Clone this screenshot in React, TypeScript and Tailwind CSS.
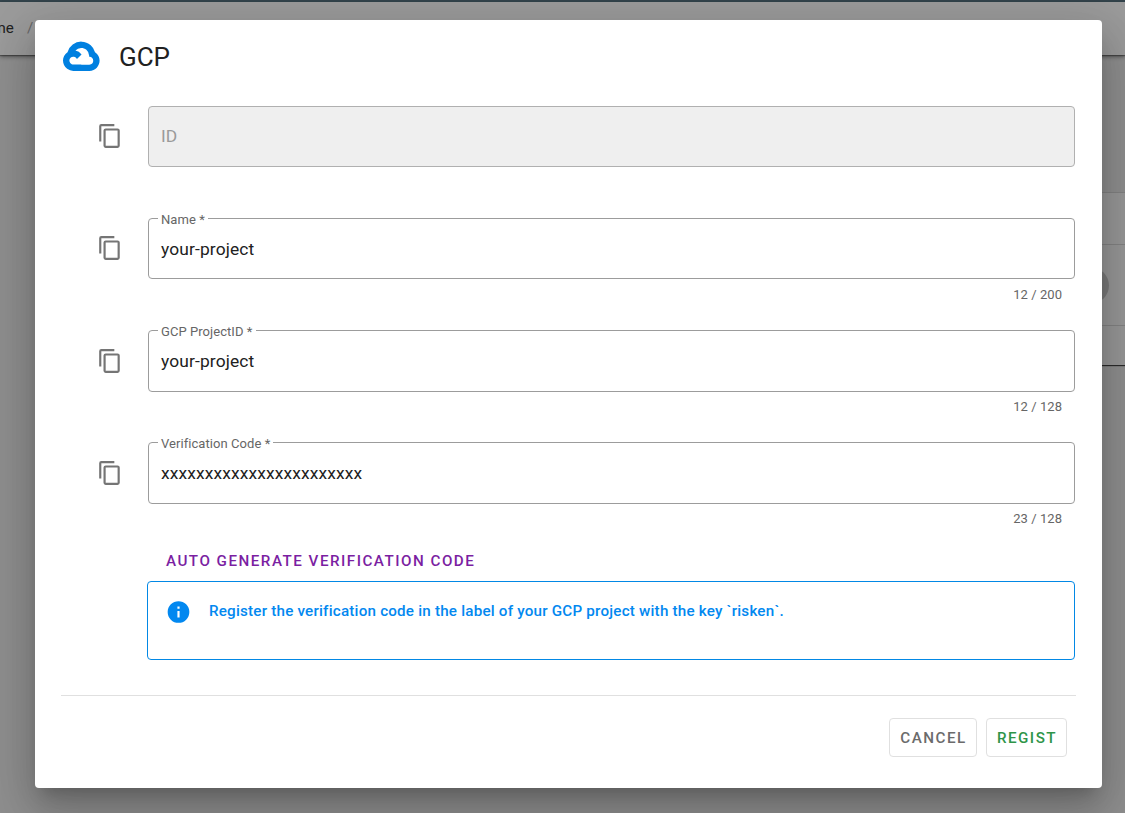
import { SiGooglecloud } from 'react-icons/si';

type FieldProps = {
  label: string;
  value?: string;
  counter?: string;
  disabled?: boolean;
  tall?: boolean;
};

function CopyIcon() {
  return (
    <svg viewBox="0 0 24 24" className="size-[26px] shrink-0 fill-[#757575]">
      <path d="M19,21H8V7H19M19,5H8A2,2 0 0,0 6,7V21A2,2 0 0,0 8,23H19A2,2 0 0,0 21,21V7A2,2 0 0,0 19,5M16,1H4A2,2 0 0,0 2,3V17H4V3H16V1Z" />
    </svg>
  );
}

function Field({ label, value, counter, disabled, tall }: FieldProps) {
  return (
    <div className="flex h-28 items-start pl-[62px]">
      <div className={`flex w-[51px] items-center ${tall ? 'h-[62px]' : 'h-[60px]'}`}>
        <CopyIcon />
      </div>
      <div className="flex-1">
        <div
          className={`relative flex items-center rounded-[4px] border px-3 ${tall ? 'h-[62px]' : 'h-[61px]'} ${
            disabled ? 'border-[#b0b0b0] bg-[#efefef]' : 'border-[#9c9c9c] bg-white'
          }`}
        >
          {disabled ? (
            <span className="pb-px text-[17.4px] leading-6 tracking-[0.1px] text-[#9a9a9a]">{label}</span>
          ) : (
            <>
              <span className="absolute -top-[7px] left-[9px] bg-white px-[3px] text-[13px] leading-4 tracking-[0.06px] text-[#666]">
                {label}
              </span>
              <span className="text-[17.4px] leading-6 tracking-[0.12px] text-[#212121]">{value}</span>
            </>
          )}
        </div>
        {counter && (
          <div
            className={`pr-[13px] text-right text-[13px] leading-[14px] tracking-[0.06px] text-[#666] ${
              tall ? 'mt-[8px]' : 'mt-[9px]'
            }`}
          >
            {counter}
          </div>
        )}
      </div>
    </div>
  );
}

export default function App() {
  return (
    <div className="relative h-[813px] w-[1125px] overflow-hidden bg-[#8f8f8f] font-['Roboto',sans-serif]">
      <div className="h-0.5 bg-[#34454d]" />
      <div className="flex h-[53px] items-center bg-[#9b9b9b] text-[15.2px] text-[#212121] shadow-[0_2px_4px_rgba(0,0,0,0.4),0_1px_1px_rgba(0,0,0,0.3)]">
        <span className="-ml-[27px]">Home</span>
        <span className="ml-[13px] text-[#666]">/</span>
      </div>
      <div className="mt-[137px] ml-[500px] flex h-[173px] flex-col border-t border-[#828282] bg-[#989898] shadow-[0_1px_1px_rgba(0,0,0,0.7)]">
        <div className="h-[52px] border-b border-[#838383]" />
        <div className="flex h-[81px] items-center border-b border-[#838383] pl-[572px]">
          <div className="size-[37px] rounded-full bg-[#7b7b7b]" />
        </div>
      </div>

      <div className="absolute top-5 left-[35px] flex h-[768px] w-[1067px] flex-col rounded-[4px] bg-white pr-[27px] shadow-[0_12px_16px_-8px_rgba(0,0,0,0.2),0_26px_41px_3px_rgba(0,0,0,0.14),0_10px_50px_9px_rgba(0,0,0,0.12)]">
        <header className="flex h-[86px] items-center pb-3 pl-7">
          <SiGooglecloud className="mb-[1.4px] size-[36.6px] text-[#0080e0]" />
          <h1 className="ml-[19.4px] text-[26px] leading-8 text-[#212121]">GCP</h1>
        </header>

        <Field label="ID" disabled />
        <Field label="Name *" value="your-project" counter="12 / 200" />
        <Field label="GCP ProjectID *" value="your-project" counter="12 / 128" tall />
        <Field label="Verification Code *" value="xxxxxxxxxxxxxxxxxxxxxxx" counter="23 / 128" tall />

        <button className="-mt-[7px] mb-[6px] ml-[131px] self-start text-[15.2px] leading-[28px] font-medium tracking-[1.49px] text-[#7b1fa2]">
          AUTO GENERATE VERIFICATION CODE
        </button>
        <div className="ml-28 flex h-[79px] shrink-0 rounded-[4px] border border-[#0288e5] pt-[17px] pl-[17px] text-[#0288f0]">
          <svg viewBox="0 0 24 24" className="h-[26px] w-[27px] fill-current">
            <path d="M13,9H11V7H13M13,17H11V11H13M12,2A10,10 0 0,0 2,12A10,10 0 0,0 12,22A10,10 0 0,0 22,12A10,10 0 0,0 12,2Z" />
          </svg>
          <p className="ml-[17px] text-[15.2px] leading-6 font-medium tracking-[0.21px]">
            Register the verification code in the label of your GCP project with the key `risken`.
          </p>
        </div>
        <hr className="mt-[35px] -mr-px ml-[26px] border-[#e0e0e0]" />
        <footer className="mt-[22px] flex justify-end gap-[9px] pr-2 text-[15.2px] font-medium tracking-[1.49px]">
          <button className="h-[39px] w-[88px] rounded-[4px] border border-[#e0e0e0] pt-0.5 pl-px text-[#6b6b6b]">CANCEL</button>
          <button className="h-[39px] w-[81px] rounded-[4px] border border-[#e0e0e0] pt-0.5 pl-px text-[#2e9549]">REGIST</button>
        </footer>
      </div>
    </div>
  );
}
